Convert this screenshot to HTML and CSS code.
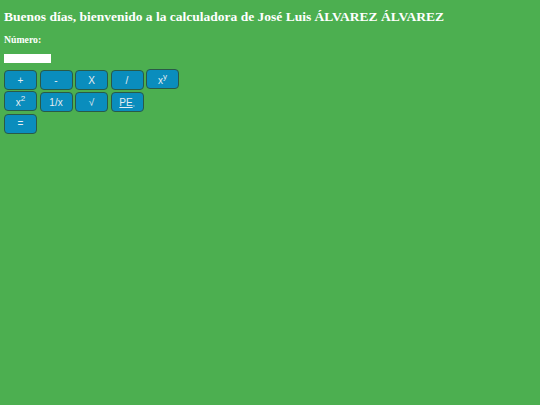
FILE: index.html
```html
<!DOCTYPE html>
<html lang="es">
<head>
<meta charset="utf-8">
<link rel="stylesheet" href="styles.css">
</head>
<body>
<h1 class="title">Buenos días, bienvenido a la calculadora de José Luis ÁLVAREZ ÁLVAREZ</h1>
<p class="label">Número:</p>
<input class="num" type="text">
<div class="keys">
<div class="row"><button class="key">+</button> <button class="key">-</button> <button class="key">X</button> <button class="key">/</button> <button class="key">x<sup>y</sup></button></div>
<div class="row"><button class="key">x<sup>2</sup></button> <button class="key">1/x</button> <button class="key">√</button> <button class="key"><u>PE</u><span class="comma">,</span></button></div>
<div class="row"><button class="key">=</button></div>
</div>
</body>
</html>
```
FILE: styles.css
```css
html, body {
  margin: 0;
  background: #4caf50;
}
body {
  padding: 0 4px;
  font-family: "Liberation Serif", serif;
  color: #fff;
}
.title {
  font-size: 13.5px;
  font-weight: bold;
  margin: 0;
  padding-top: 8px;
  line-height: 17px;
}
.label {
  font-size: 9.75px;
  font-weight: bold;
  margin: 9px 0 0;
  line-height: 12px;
}
.num {
  display: block;
  margin: 8px 0 0;
  width: 47px;
  height: 9px;
  box-sizing: border-box;
  border: none;
  padding: 0;
  background: #fff;
}
.keys {
  margin-top: 6px;
  font-size: 10px;
}
.row {
  line-height: 22px;
  height: 22px;
}
.key {
  display: inline-block;
  width: 33px;
  height: 20px;
  box-sizing: border-box;
  padding: 0;
  border: 1px solid #2a5a47;
  border-radius: 4px;
  background: #0a8dbd;
  color: #e6eef2;
  font-family: "Liberation Sans", sans-serif;
  font-size: 10px;
  line-height: normal;
  vertical-align: baseline;
}
.key sup {
  font-size: 8px;
  line-height: 1;
  vertical-align: 5px;
}
.comma {
  font-size: 7px;
}
```
